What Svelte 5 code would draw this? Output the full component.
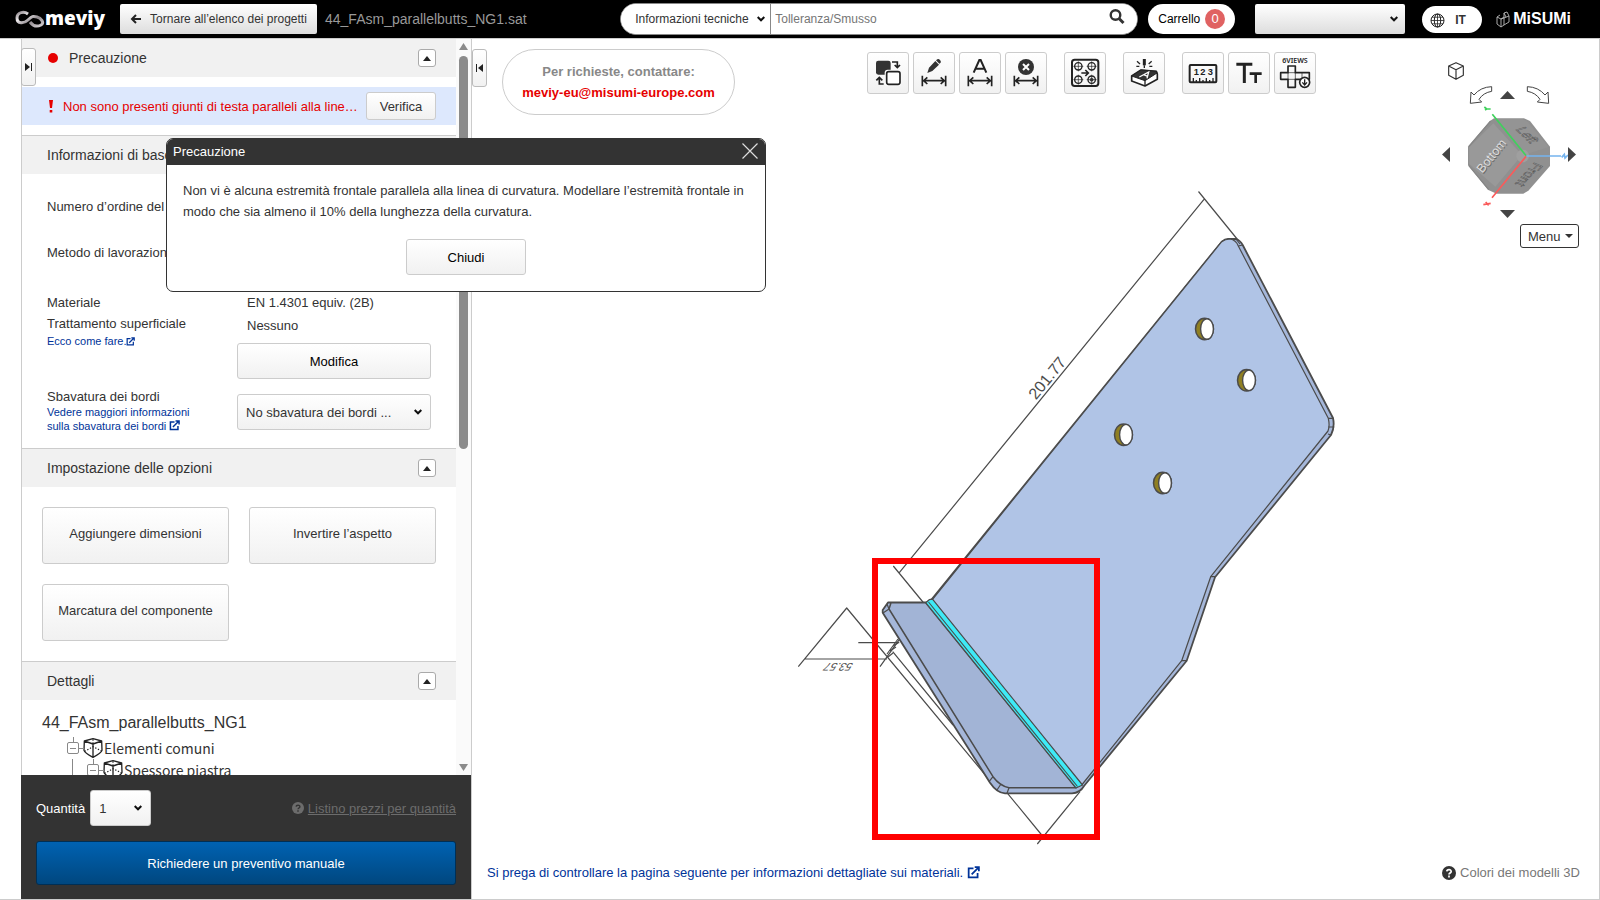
<script>
  let topic = $state('Informazioni tecniche');
  let query = $state('');
  let quantity = $state('1');
  let account = $state('');
  let deburring = $state('No sbavatura dei bordi ...');
  let dialogOpen = $state(true);

  const holes = [
    [1204.5, 329],
    [1246.5, 380.3],
    [1123.5, 434.7],
    [1162.5, 483]
  ];
  const options = ['Aggiungere dimensioni', 'Invertire l’aspetto', 'Marcatura del componente'];
  const toolGroups = [
    [
      { id: 'swap', label: 'Invertire' },
      { id: 'edit', label: 'Modificare quota' },
      { id: 'text', label: 'Aggiungere quota' },
      { id: 'delete', label: 'Eliminare quota' }
    ],
    [{ id: 'holes', label: 'Fori' }],
    [{ id: 'mark', label: 'Marcatura' }],
    [
      { id: 'measure', label: 'Misurare' },
      { id: 'size', label: 'Dimensione testo' },
      { id: 'views', label: 'Sei viste' }
    ]
  ];
</script>

{#snippet external(size)}
  <svg class="ext" width={size} height={size} viewBox="0 0 14 14" aria-hidden="true">
    <path d="M7 2.6H1.8v9.6h9.6V7.5M5 9l7-7M8.3 1.2h4.5v4.5" fill="none" stroke="currentColor" stroke-width="1.9" />
  </svg>
{/snippet}

{#snippet help(size)}
  <svg width={size} height={size} viewBox="0 0 14 14" aria-hidden="true">
    <circle cx="7" cy="7" r="7" fill="currentColor" />
    <path class="q" d="M4.8 5.4C4.9 3.2 9.2 3 9.2 5.5 9.2 7 7 7 7 8.5M7 9.6v1.8" fill="none" stroke-width="1.7" />
  </svg>
{/snippet}

{#snippet sectionHead(title, alert)}
  <header class="section-head">
    {#if alert}<span class="dot"></span>{/if}
    <h2>{title}</h2>
    <button class="collapse" aria-label="Comprimi {title}">
      <svg width="8" height="5" viewBox="0 0 8 5"><path d="M4 0l4 5H0z" fill="#222" /></svg>
    </button>
  </header>
{/snippet}

{#snippet treeIcon()}
  <svg class="cube-icon" width="20" height="20" viewBox="0 0 60 60" aria-hidden="true">
    <path d="M30 2L56 9l1 28q-2 8-27 21Q5 45 3 37L4 9zM4 9l26 9 26-9M30 18v40" fill="none" stroke="#222" stroke-width="4" stroke-linejoin="round" />
    <path d="M30 4v14M5 40l25-14 26 13" fill="none" stroke="#222" stroke-width="3.5" stroke-dasharray="4 5" />
  </svg>
{/snippet}

{#snippet dimension()}
  <path d="M28 71v32M98 71v32M32 86h62M43 76L32 86l11 10M83 76l11 10-11 10" stroke-width="5" />
{/snippet}

{#snippet toolIcon(id)}
  <svg width="40" height="40" viewBox="3 3 120 120" fill="none" stroke="#222" aria-hidden="true">
    {#if id === 'swap'}
      <rect x="27" y="26" width="44" height="42" rx="7" fill="#333" stroke="none" />
      <rect x="53" y="53" width="50" height="50" rx="9" fill="#fbfbfb" stroke="none" />
      <rect x="59" y="59" width="40" height="38" rx="6" fill="#fff" stroke-width="5" />
      <path d="M75 30h16v16M83 39l8 8 8-8M50 96H37V78M28 85l9-9 9 9" stroke-width="5" />
    {:else if id === 'edit'}
      <path d="M43 63l5-16 19-20 11 11-20 19zM69 25l4-3q4-2 8 2t2 8l-4 3z" fill="#333" stroke="none" />
      {@render dimension()}
    {:else if id === 'text'}
      <path d="M44 62l17-38h4l17 38M50 50h26" stroke-width="6" />
      {@render dimension()}
    {:else if id === 'delete'}
      <circle cx="63" cy="45" r="24" fill="#333" stroke="none" />
      <path d="M54 36l18 18M72 36L54 54" stroke="#fff" stroke-width="6" />
      {@render dimension()}
    {:else if id === 'holes'}
      <rect x="24" y="23" width="79" height="79" rx="8" stroke-width="6" />
      {#each [[43, 43], [83, 43], [43, 83], [83, 83]] as [x, y]}
        <circle cx={x} cy={y} r="11" stroke-width="4" />
        <path d="M{x - 15} {y}h30M{x} {y - 15}v30" stroke-width="2" />
      {/each}
      <circle cx="83" cy="83" r="5" fill="#333" />
      <path d="M52 63h20M64 54l9 9-9 9" stroke-width="5" />
    {:else if id === 'mark'}
      <path d="M26 72l28-18 46 4 3 8v16l-37 20-40-15z" fill="#fff" stroke-width="5" stroke-linejoin="round" />
      <path d="M26 72l28-18 46 4 2 5-36 23z" fill="#333" stroke-width="3" stroke-linejoin="round" />
      <path d="M66 86v14" stroke-width="4" />
      <path d="M49 75l28-15-5 19M62 68l12 5" stroke="#fff" stroke-width="4" />
      <path d="M64 21v19" stroke-width="9" />
      <path d="M64 40v8M42 28l9 8M40 43h9M86 28l-9 8M88 43h-9" stroke-width="4" />
    {:else if id === 'measure'}
      <rect x="23" y="39" width="80" height="52" rx="3" stroke-width="6" />
      <path d="M34 90V78M43 90v-6M53 90V78M63 90v-6M73 90V78M83 90v-6M93 90V78" stroke-width="4" />
      <g fill="#222" stroke="none" font-family="Liberation Sans, Arial, sans-serif" font-size="28" font-weight="700">
        <text x="35" y="70">1</text><text x="55" y="70">2</text><text x="77" y="70">3</text>
      </g>
    {:else if id === 'size'}
      <path d="M25 37h48M49 37v56" stroke-width="9" />
      <path d="M65 65h36M83 65v28" stroke-width="8" />
    {:else}
      <text x="63" y="34" text-anchor="middle" fill="#222" stroke="none" font-family="Noto Sans, sans-serif" font-size="21" font-weight="600">6VIEWS</text>
      <path d="M42 42h22v20h42v20H64v24H42V82H20V62h22z" stroke-width="5" stroke-linejoin="round" />
      <path d="M42 62h22v20H42zM84 62v20" stroke-width="2" />
      <circle cx="92" cy="91" r="15" fill="#fff" stroke-width="5" />
      <path d="M92 82v16M85 91l7 8 7-8" stroke-width="4" />
    {/if}
  </svg>
{/snippet}

<div class="app">
  <header class="topbar">
    <a class="brand" href="#home" aria-label="meviy">
      <svg width="30" height="18" viewBox="0 0 30 18" aria-hidden="true">
        <defs>
          <linearGradient id="loop" x1="0" x2="1" y1="0" y2="1">
            <stop offset="0" stop-color="#8d868b" />
            <stop offset="0.3" stop-color="#f1eef0" />
            <stop offset="0.6" stop-color="#8f888d" />
            <stop offset="1" stop-color="#d5d1d4" />
          </linearGradient>
        </defs>
        <path d="M13 4C9 1 2 2 2 8s7 6 11 2 5-4 9-3 8 6 4 8-8 1-11-3" fill="none" stroke="url(#loop)" stroke-width="3" />
      </svg>
      <span>meviy</span>
    </a>
    <button class="back">
      <svg width="12" height="10" viewBox="0 0 12 10" aria-hidden="true">
        <path d="M11 5H2M6 1L2 5l4 4" fill="none" stroke="#222" stroke-width="2" />
      </svg>
      Tornare all’elenco dei progetti
    </button>
    <span class="filename">44_FAsm_parallelbutts_NG1.sat</span>
    <form class="search">
      <select aria-label="Categoria di ricerca" bind:value={topic}>
        <option>Informazioni tecniche</option>
      </select>
      <input type="text" aria-label="Ricerca" placeholder="Tolleranza/Smusso" bind:value={query} />
      <button type="button" aria-label="Cerca">
        <svg width="16" height="16" viewBox="0 0 16 16" aria-hidden="true">
          <circle cx="6.5" cy="6" r="4.8" fill="none" stroke="#333" stroke-width="2.4" />
          <path d="M10 9.5l4.5 4.5" stroke="#333" stroke-width="3" />
        </svg>
      </button>
    </form>
    <button class="cart">Carrello <span>0</span></button>
    <select class="account" aria-label="Account" bind:value={account}>
      <option value=""></option>
    </select>
    <button class="lang">
      <svg width="15" height="15" viewBox="0 0 15 15" fill="none" stroke="#222" aria-hidden="true">
        <circle cx="7.5" cy="7.5" r="6.5" />
        <path d="M7.5 1v13M1 7.5h13M2 4.2h11M2 10.8h11" stroke-width="0.8" />
        <ellipse cx="7.5" cy="7.5" rx="3.2" ry="6.5" />
      </svg>
      IT
    </button>
    <a class="maker" href="#misumi" aria-label="MiSUMi">
      <svg width="14" height="17" viewBox="0 0 14 17" fill="none" stroke="#bbb" stroke-width="0.9" aria-hidden="true">
        <path d="M1 6l4 2v8l-4-3zM5 8l3-2v8l-3 2M1 6l3-2M8 7l5-2v6l-5 3M8 6V2l3-1 2 4M8 2l2 4M5 8L8 7" />
      </svg>
      <span>MiSUMi</span>
    </a>
  </header>

  <main>
    <aside class="panel">
      <button class="tab left-tab" aria-label="Espandi pannello">
        <svg width="8" height="8" viewBox="0 0 8 8" aria-hidden="true"><path d="M0 0l5 4-5 4zM6 0h1v8H6z" fill="#222" /></svg>
      </button>
      <div class="scroll-area">
        <div class="sections">
          <section class="caution">
            {@render sectionHead('Precauzione', true)}
            <div class="alert">
              <svg width="4" height="13" viewBox="0 0 4 13" aria-hidden="true"><path d="M0 0h4l-1 8H1zM.7 10h2.6v2.6H.7z" fill="#e60000" /></svg>
              <span>Non sono presenti giunti di testa paralleli alla line…</span>
              <button onclick={() => (dialogOpen = true)}>Verifica</button>
            </div>
          </section>
          <section>
            {@render sectionHead('Informazioni di base', false)}
            <div class="info">
              <div class="row short"><span>Numero d’ordine del</span></div>
              <div class="row short"><span>Metodo di lavorazione</span></div>
              <div class="row material">
                <div class="labels">
                  <p>Materiale</p>
                  <p>Trattamento superficiale</p>
                  <a href="#surface">Ecco come fare.{@render external(9)}</a>
                </div>
                <div class="values">
                  <p>EN 1.4301 equiv. (2B)</p>
                  <p>Nessuno</p>
                  <button class="wide">Modifica</button>
                </div>
              </div>
              <div class="row deburr">
                <div class="labels">
                  <label for="deburr">Sbavatura dei bordi</label>
                  <a href="#deburring">Vedere maggiori informazioni<br />sulla sbavatura dei bordi {@render external(11)}</a>
                </div>
                <select id="deburr" class="wide" bind:value={deburring}>
                  <option>No sbavatura dei bordi ...</option>
                </select>
              </div>
            </div>
          </section>
          <section>
            {@render sectionHead('Impostazione delle opzioni', false)}
            <div class="options">
              {#each options as option}
                <button>{option}</button>
              {/each}
            </div>
          </section>
          <section>
            {@render sectionHead('Dettagli', false)}
            <div class="details">
              <h3>44_FAsm_parallelbutts_NG1</h3>
              <ul class="tree">
                <li><i class="twig"></i>{@render treeIcon()}<span>Elementi comuni</span></li>
                <li class="nested"><i class="twig"></i>{@render treeIcon()}<span>Spessore piastra</span></li>
              </ul>
            </div>
          </section>
        </div>
        <div class="scrollbar" aria-hidden="true">
          <svg width="9" height="7" viewBox="0 0 9 7"><path d="M4.5 0L9 7H0z" fill="#8b8b8b" /></svg>
          <div class="track"><div class="thumb"></div></div>
          <svg width="9" height="7" viewBox="0 0 9 7"><path d="M0 0h9L4.5 7z" fill="#8b8b8b" /></svg>
        </div>
      </div>
      <footer class="order">
        <div class="quantity">
          <label for="qty">Quantità</label>
          <select id="qty" bind:value={quantity}>
            <option>1</option>
            <option>2</option>
          </select>
          <a href="#prices">{@render help(12)}<span>Listino prezzi per quantità</span></a>
        </div>
        <button class="quote">Richiedere un preventivo manuale</button>
      </footer>
    </aside>

    <section class="viewer">
      <svg class="model" viewBox="472 39 1127 860" role="img" aria-label="Modello 3D della piastra piegata">
        <g stroke="#4b4b4b" stroke-linejoin="round" fill="none">
          <g stroke-width="1.2">
            <path d="M1198.5 191.5l39 48M1204 199.3L899.3 572.7M893.3 566l30 36.5" />
            <path d="M798.3 666.7l48.4-58.7 142 171M805 659h82M858.3 642.7h41M880 666.7l20-28" />
            <path d="M892.7 651.7L953 725M1006.7 792.3l35 42.7M1080 791.7L1037.3 844" />
            <path d="M887 654l11-15M890 651l6-4M893 646l5-3M888 657l5-4" />
          </g>
          <path d="M1221.7 241.7Q1225 239 1228 239H1236Q1240 240 1242.7 245L1333 418Q1335 427 1331 435L1215 577.3L1186.7 660.7L1084 786Q1080 793 1072 793.3H1005Q997 793 990 782.7L882.7 612.7V610L888 602.5H926.7L931.7 599.3Z" fill="#a5b7da" stroke-width="1.8" />
          <path d="M1221.7 241.7Q1225 239 1230 239Q1236 240 1238.3 246L1328.3 418.3Q1330 426 1328 431L1210.7 576.7L1181.7 660.7L1081.7 785L932 600Z" fill="#b0c4e6" stroke-width="1.2" />
          <path d="M925.7 602.7H891L889 609L993 776.7Q1000 786 1009 787.7H1076Z" fill="#a2b4d6" stroke-width="1.5" />
          <path d="M889 609l-6 4M889 609l-2-5M993 776.7l-4 5M1001 784l-4 6M1009 787.7l-2 5.5M1328.3 418.3l5 0M1328.3 427h6M1328 434l3 1M1210.7 576.7h4.3M1181.7 660.7h5M1238.3 246l4.4-1M1236 239l4 5" stroke-width="1.2" />
          <path d="M925.7 602.7l3.500-3 3.300-.5L1082.500 785l-6.500 3z" fill="#3eeaf6" stroke-width="1.2" />
          <path d="M928.500 602L1077.500 786.500" stroke-width="1.1" />
          {#each holes as [x, y]}
            <ellipse cx={x} cy={y} rx="9" ry="10.7" fill="#8f7f22" stroke-width="1.5" />
            <ellipse cx={x + 2.5} cy={y} rx="6.4" ry="10.3" fill="#fff" stroke-width="1.4" />
          {/each}
        </g>
        <g fill="#4b4b4b" font-family="Liberation Sans, Arial, sans-serif">
          <text transform="translate(1036 400.5) rotate(-50.8)" font-size="16">201.77</text>
          <text transform="translate(854 663) rotate(180) skewX(-30)" font-size="11">53.57</text>
        </g>
        <rect x="875" y="561" width="222" height="276" fill="none" stroke="#f00" stroke-width="6" />
      </svg>

      <div class="viewer-top">
        <button class="tab" aria-label="Comprimi pannello">
          <svg width="8" height="8" viewBox="0 0 8 8" aria-hidden="true"><path d="M7 0L2 4l5 4zM0 0h1v8H0z" fill="#222" /></svg>
        </button>
        <div class="contact">
          <span>Per richieste, contattare:</span>
          <a href="mailto:meviy-eu@misumi-europe.com">meviy-eu@misumi-europe.com</a>
        </div>
        <div class="toolbar">
          {#each toolGroups as group}
            <div class="group">
              {#each group as tool}
                <button aria-label={tool.label}>{@render toolIcon(tool.id)}</button>
              {/each}
            </div>
          {/each}
        </div>
        <nav class="orient" aria-label="Orientamento">
          <button class="home" aria-label="Vista isometrica">
            <svg width="16" height="18" viewBox="0 0 48 54" fill="none" stroke="#333" stroke-width="3.5" stroke-linejoin="round">
              <path d="M24 2l22 10v28L24 52 2 40V12zM2 12l22 11 22-11M24 23v29" />
            </svg>
          </button>
          <div class="turns">
            <button aria-label="Ruota in senso antiorario">
              <svg width="22" height="18" viewBox="0 0 66 54" fill="none" stroke="#444" stroke-width="3"><path d="M65 2v14Q40 20 27 40l8 8-34 4 2-34 9 9Q32 3 65 2z" /></svg>
            </button>
            <button class="vertical" aria-label="Ruota verso l’alto">
              <svg width="15" height="8" viewBox="0 0 15 8"><path d="M7.5 0L15 8H0z" fill="#444" /></svg>
            </button>
            <button aria-label="Ruota in senso orario">
              <svg width="22" height="18" viewBox="0 0 66 54" fill="none" stroke="#444" stroke-width="3"><path d="M1 2v14q25 4 38 24l-8 8 34 4-2-34-9 9Q34 3 1 2z" /></svg>
            </button>
          </div>
          <div class="middle">
            <button aria-label="Ruota a sinistra"><svg width="8" height="15" viewBox="0 0 8 15"><path d="M0 7.5L8 0v15z" fill="#444" /></svg></button>
            <svg class="gizmo" width="118" height="101" viewBox="150 192 354 303" role="img" aria-label="Cubo di orientamento">
              <path d="M282 235h90l18 8 60 77v58l-65 74-15 9h-80l-25-11-61-75v-55l66-77z" fill="#909090" />
              <path d="M280 250L366 345 286 440 208 372v-50z" fill="#999" />
              <path d="M292 237h78l14 10 62 74-68 22z" fill="#949494" />
              <path d="M272 243l-66 77M266 449l-60-73" stroke="#868686" stroke-width="4" />
              <circle cx="368" cy="348" r="19" fill="#9f9f9f" />
              <g font-family="Liberation Sans, Arial, sans-serif">
                <text transform="translate(250 404) rotate(-51)" font-size="37" fill="#666">Bottom</text>
                <text transform="translate(247 401) rotate(-51)" font-size="37" fill="#ddd">Bottom</text>
                <text transform="translate(345 268) rotate(43) skewX(-30)" font-size="38" fill="#a2a2a2" stroke="#555" stroke-width="1.5">Left</text>
                <text transform="translate(404 366) rotate(132) skewX(20)" font-size="38" fill="#a2a2a2" stroke="#555" stroke-width="1.5">Front</text>
              </g>
              <g stroke-width="5" fill="none">
                <path d="M379 348L277 223M272 207h-12l-7-6M260 207l-5 3" stroke="#3fd15c" />
                <path d="M379 348L276 473M250 494l22-4M257 486l9 10" stroke="#fa5a5a" />
                <path d="M379 348h104M485 352l8-9 2 11 9-9" stroke="#76b4ee" />
              </g>
            </svg>
            <button aria-label="Ruota a destra"><svg width="8" height="15" viewBox="0 0 8 15"><path d="M8 7.5L0 0v15z" fill="#444" /></svg></button>
          </div>
          <button class="down vertical" aria-label="Ruota verso il basso"><svg width="15" height="8" viewBox="0 0 15 8"><path d="M0 0h15L7.5 8z" fill="#444" /></svg></button>
          <button class="menu">Menu <svg width="8" height="4" viewBox="0 0 8 4" aria-hidden="true"><path d="M0 0h8L4 4z" fill="#333" /></svg></button>
        </nav>
      </div>

      <div class="viewer-bottom">
        <a href="#materials">Si prega di controllare la pagina seguente per informazioni dettagliate sui materiali. {@render external(13)}</a>
        <button class="colors">{@render help(14)}<span>Colori dei modelli 3D</span></button>
      </div>
    </section>
  </main>

  {#if dialogOpen}
    <div class="dialog" role="dialog" aria-labelledby="dialog-title">
      <header>
        <h2 id="dialog-title">Precauzione</h2>
        <button aria-label="Chiudi finestra" onclick={() => (dialogOpen = false)}>
          <svg width="16" height="16" viewBox="0 0 16 16"><path d="M.5.5l15 15M15.5.5l-15 15" stroke="#ddd" stroke-width="1.2" /></svg>
        </button>
      </header>
      <p>Non vi è alcuna estremità frontale parallela alla linea di curvatura. Modellare l’estremità frontale in modo che sia almeno il 10% della lunghezza della curvatura.</p>
      <button class="close" onclick={() => (dialogOpen = false)}>Chiudi</button>
    </div>
  {/if}
</div>

<style>
  :global(body) {
    margin: 0;
  }
  .app {
    --chevron: url("data:image/svg+xml,%3Csvg xmlns='http://www.w3.org/2000/svg' width='8' height='6' viewBox='0 0 8 6'%3E%3Cpath d='M0.700 1l3.300 3.300L7.300 1' fill='none' stroke='%23111' stroke-width='2'/%3E%3C/svg%3E");
    --light: linear-gradient(#fff, #f1f1f1);
    --steel: linear-gradient(#fff, #ddd);
    position: relative;
    display: flex;
    flex-direction: column;
    height: 100vh;
    font: 13px/21px "Liberation Sans", Arial, sans-serif;
    color: #333;
    background: #fff;
  }
  .app * {
    box-sizing: border-box;
  }
  h2, h3, p, ul {
    margin: 0;
    padding: 0;
    font-weight: 400;
  }
  svg {
    flex: none;
  }
  button, select, input {
    font: inherit;
    color: inherit;
    margin: 0;
  }
  button {
    padding: 0;
    border: 1px solid #ccc;
    border-radius: 3px;
    background: var(--light);
  }
  select {
    appearance: none;
    padding: 0 20px 0 8px;
    border: 1px solid #ccc;
    border-radius: 3px;
    background: var(--chevron) right 8px center no-repeat, var(--light);
  }
  a {
    color: #003399;
    text-decoration: none;
  }

  .topbar {
    display: flex;
    align-items: center;
    height: 38px;
    flex: none;
    padding: 0 29px 0 15px;
    background: #000;
    font-size: 12px;
  }
  .brand {
    display: flex;
    align-items: center;
    width: 105px;
    color: #fff;
    font: 800 19px/24px "Open Sans", sans-serif;
  }
  .brand span {
    padding-bottom: 3px;
  }
  .back {
    display: flex;
    align-items: center;
    justify-content: center;
    gap: 8px;
    width: 197px;
    height: 30px;
    border: 0;
    border-radius: 2px;
    background: var(--steel);
  }
  .filename {
    margin-left: 8px;
    font-size: 14px;
    color: #999;
  }
  .search {
    display: flex;
    width: 518px;
    height: 32px;
    margin-left: auto;
    border: 1px solid #888;
    border-radius: 16px;
    background: #fff;
    overflow: hidden;
  }
  .search select {
    width: 150px;
    padding: 0 0 0 14px;
    border: 0;
    border-right: 1px solid #888;
    border-radius: 0;
    background: var(--chevron) right 5px center no-repeat, #fff;
  }
  .search input {
    flex: 1;
    min-width: 0;
    padding: 0 4px;
    border: 0;
    outline: 0;
  }
  .search input::placeholder {
    color: #757575;
  }
  .search button {
    width: 40px;
    padding: 0 0 4px;
    border: 0;
    background: #fff;
  }
  .search button svg {
    vertical-align: middle;
  }
  .cart {
    display: flex;
    align-items: center;
    gap: 5px;
    width: 87px;
    height: 30px;
    margin-left: 10px;
    padding: 0 10px;
    border: 0;
    border-radius: 15px;
    background: #fff;
    color: #000;
  }
  .cart span {
    width: 20px;
    height: 20px;
    border-radius: 50%;
    background: #e06262;
    color: #fff;
    font-size: 13px;
    line-height: 19px;
  }
  .account {
    width: 150px;
    height: 30px;
    margin-left: 20px;
    border: 0;
    border-radius: 2px;
    background: var(--chevron) right 7px center no-repeat, var(--steel);
  }
  .lang {
    display: flex;
    align-items: center;
    gap: 10px;
    width: 60px;
    height: 27px;
    margin-left: 17px;
    padding: 2px 8px 0;
    border: 0;
    border-radius: 14px;
    background: #fff;
    font-weight: 700;
  }
  .maker {
    display: flex;
    align-items: center;
    gap: 3px;
    margin-left: 14px;
    color: #fff;
    font: 700 16px/20px "Liberation Sans", Arial, sans-serif;
  }

  main {
    display: flex;
    flex: 1;
    min-height: 0;
    padding-left: 21px;
    border: solid #ccc;
    border-width: 1px 1px 1px 0;
  }
  .panel {
    position: relative;
    display: flex;
    flex-direction: column;
    flex: none;
    width: 451px;
    border: solid #ccc;
    border-width: 0 1px;
  }
  .tab {
    display: flex;
    align-items: center;
    justify-content: center;
    width: 15px;
    height: 38px;
    flex: none;
    border-color: #bbb;
  }
  .left-tab {
    position: absolute;
    top: 9px;
    left: -1px;
    z-index: 1;
  }
  .scroll-area {
    display: flex;
    flex: 1;
    min-height: 0;
    overflow: hidden;
  }
  .sections {
    flex: 1;
    min-width: 0;
  }
  .scrollbar {
    display: flex;
    flex-direction: column;
    align-items: center;
    gap: 6px;
    width: 15px;
    padding: 4px 0;
    background: #fafafa;
  }
  .track {
    flex: 1;
    width: 9px;
  }
  .thumb {
    height: 56%;
    border-radius: 5px;
    background: #8b8b8b;
  }
  .section-head {
    display: flex;
    align-items: center;
    height: 39px;
    padding: 0 20px 0 25px;
    border-top: 1px solid #ccc;
    background: #f1f1f1;
  }
  .caution .section-head {
    height: 38px;
    border-top: 0;
  }
  .section-head h2 {
    flex: 1;
    font-size: 14px;
  }
  .dot {
    width: 10px;
    height: 10px;
    margin: 0 11px 0 1px;
    border-radius: 50%;
    background: #e60000;
  }
  .collapse {
    display: flex;
    align-items: center;
    justify-content: center;
    width: 18px;
    height: 18px;
    border-color: #aaa;
    background: #fff;
  }
  .alert {
    display: flex;
    align-items: center;
    gap: 10px;
    height: 38px;
    margin: 10px 0;
    padding: 0 20px 0 27px;
    background: #dde8fd;
    color: #e60000;
  }
  .alert span {
    flex: 1;
    min-width: 0;
    white-space: nowrap;
  }
  .alert button {
    flex: none;
    width: 70px;
    height: 28px;
    color: #333;
  }
  .info {
    padding: 19px 25px 15px;
  }
  .row {
    display: flex;
  }
  .short {
    align-items: center;
    height: 26px;
    margin-bottom: 20px;
    white-space: nowrap;
  }
  .material {
    padding-top: 6px;
    margin-bottom: 9px;
  }
  .labels {
    width: 190px;
    padding-top: 1px;
  }
  .labels a {
    display: block;
    font-size: 11px;
    line-height: 14px;
  }
  .ext {
    vertical-align: -1px;
  }
  .values p {
    padding-left: 10px;
    line-height: 23px;
  }
  .wide {
    width: 194px;
    height: 36px;
  }
  .values .wide {
    margin-top: 6px;
    color: #000;
  }
  .deburr label {
    display: block;
    line-height: 16px;
  }
  select.wide {
    margin-top: 6px;
  }
  .options {
    display: grid;
    grid-template-columns: 1fr 1fr;
    gap: 20px;
    padding: 20px;
  }
  .options button {
    height: 57px;
    padding-bottom: 4px;
  }
  .details {
    padding: 11px 20px;
  }
  .details h3 {
    margin-bottom: 2px;
    font-size: 16px;
    line-height: 24px;
  }
  .tree {
    list-style: none;
    padding-left: 25px;
    font: 14px/22px "Noto Sans CJK JP", "Noto Sans", sans-serif;
  }
  .tree li {
    display: flex;
    align-items: center;
    height: 22px;
  }
  .tree .nested {
    margin-left: -6px;
    padding-left: 26px;
    background: linear-gradient(#888, #888) 11px 0 / 1px 100% no-repeat;
  }
  .twig {
    position: relative;
    width: 12px;
    height: 12px;
    margin-right: 4px;
    border: 1px solid #888;
    border-radius: 2px;
    background: linear-gradient(#888, #888) center / 6px 1px no-repeat;
  }
  .twig::before {
    content: "";
    position: absolute;
    left: 5px;
    top: -6px;
    width: 1px;
    height: 5px;
    background: #888;
  }
  .twig::after {
    content: "";
    position: absolute;
    left: 11px;
    top: 5px;
    width: 5px;
    height: 1px;
    background: #888;
  }
  .cube-icon {
    margin-right: 1px;
  }
  .order {
    display: flex;
    flex-direction: column;
    gap: 15px;
    flex: none;
    margin-left: -1px;
    padding: 15px 15px 14px;
    background: #333;
    color: #fff;
  }
  .quantity {
    display: flex;
    align-items: center;
  }
  .quantity select {
    width: 61px;
    height: 36px;
    margin-left: 5px;
    color: #333;
  }
  .quantity a {
    display: flex;
    align-items: center;
    gap: 4px;
    margin-left: auto;
    color: #6c6c6c;
  }
  .quantity a span {
    text-decoration: underline;
  }
  .q {
    stroke: #fff;
  }
  .quantity .q {
    stroke: #333;
  }
  .quote {
    height: 44px;
    border-color: #002f55;
    background: linear-gradient(#0062b2, #00477f);
  }

  .viewer {
    position: relative;
    display: flex;
    flex-direction: column;
    flex: 1;
    min-width: 0;
  }
  .model {
    position: absolute;
    inset: 0;
    width: 100%;
    height: 100%;
  }
  .viewer-top {
    position: relative;
    display: flex;
    align-items: flex-start;
    padding: 10px 20px 0 0;
  }
  .contact {
    display: flex;
    flex-direction: column;
    align-items: center;
    justify-content: center;
    width: 233px;
    height: 66px;
    margin-left: 15px;
    border: 1px solid #ccc;
    border-radius: 33px;
    font-weight: 700;
    color: #888;
  }
  .contact a {
    color: #e60000;
  }
  .toolbar {
    display: flex;
    gap: 17px;
    margin: 3px 126px 0 auto;
  }
  .group {
    display: flex;
    gap: 4px;
  }
  .group button {
    width: 42px;
    height: 42px;
  }
  .group svg {
    display: block;
  }
  .orient {
    display: flex;
    flex-direction: column;
    width: 137px;
    margin-top: 13px;
  }
  .orient button:not(.menu) {
    border: 0;
    background: none;
  }
  .orient svg {
    display: block;
    overflow: visible;
  }
  .home {
    align-self: flex-start;
    margin: 0 0 6px 6px;
  }
  .turns {
    display: flex;
    align-items: center;
    justify-content: center;
    gap: 8px;
    padding-right: 3px;
  }
  .orient .vertical {
    padding-right: 4px;
  }
  .middle {
    display: flex;
    align-items: center;
  }
  .down {
    align-self: center;
    margin: 5px 3px 6px 0;
  }
  .menu {
    display: flex;
    align-items: center;
    justify-content: space-between;
    align-self: flex-end;
    width: 59px;
    height: 24px;
    padding: 0 5px 0 7px;
    border-color: #333;
    background: #fff;
  }
  .viewer-bottom {
    position: relative;
    display: flex;
    justify-content: space-between;
    align-items: center;
    margin-top: auto;
    padding: 0 19px 16px 15px;
  }
  .viewer-bottom .ext {
    vertical-align: -2px;
  }
  .colors {
    display: flex;
    align-items: center;
    gap: 4px;
    border: 0;
    background: none;
  }
  .colors span {
    color: #777;
  }

  .dialog {
    position: absolute;
    top: 138px;
    left: 166px;
    z-index: 2;
    display: flex;
    flex-direction: column;
    width: 600px;
    padding-bottom: 16px;
    border: 1px solid #333;
    border-radius: 7px;
    background: #fff;
    overflow: hidden;
  }
  .dialog header {
    display: flex;
    align-items: center;
    justify-content: space-between;
    height: 26px;
    padding: 0 7px 2px 6px;
    background: #333;
    color: #fff;
  }
  .dialog h2 {
    font-size: 13px;
  }
  .dialog header button {
    border: 0;
    background: none;
  }
  .dialog header svg {
    display: block;
  }
  .dialog p {
    padding: 15px 16px 17px;
  }
  .dialog .close {
    align-self: center;
    width: 120px;
    height: 36px;
    color: #000;
  }
</style>
